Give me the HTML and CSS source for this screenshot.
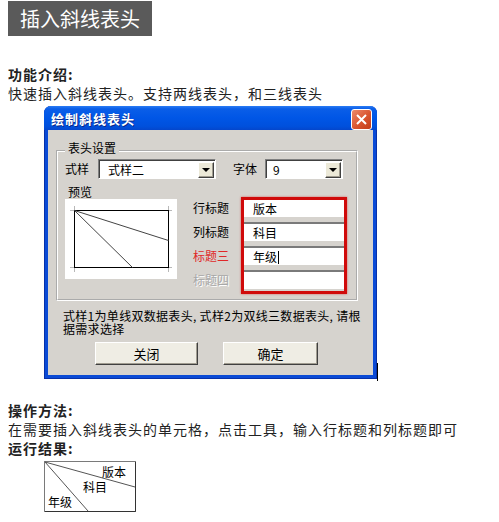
FILE: index.html
```html
<!DOCTYPE html>
<html lang="zh-CN">
<head>
  <meta charset="UTF-8">
  <title>插入斜线表头</title>
  <link rel="stylesheet" href="styles.css">
</head>
<body>

  <div class="banner">插入斜线表头</div>

  <h3 class="head">功能介绍:</h3>
  <p class="line">快速插入斜线表头。支持两线表头，和三线表头</p>

  <div class="dialog">
    <div class="titlebar">
      <span class="title">绘制斜线表头</span>
      <span class="close">
        <svg width="13" height="13" viewBox="0 0 13 13">
          <path d="M2 2 L11 11 M11 2 L2 11" stroke="#fff" stroke-width="2" fill="none"/>
        </svg>
      </span>
    </div>

    <div class="dlg-body">
      <fieldset class="group">
        <legend>表头设置</legend>

        <div class="row-top">
          <span class="lbl">式样</span>
          <div class="select sel-style">
            <span class="sel-text">式样二</span>
            <span class="drop"></span>
          </div>
          <span class="lbl lbl-font">字体</span>
          <div class="select sel-size">
            <span class="sel-text">9</span>
            <span class="drop"></span>
          </div>
        </div>

        <div class="row-main">
          <div class="preview-col">
            <div class="preview-lbl">预览</div>
            <div class="preview">
              <svg width="112" height="80" viewBox="0 0 112 80">
                <g stroke="#b8b8b8" stroke-width="1">
                  <path d="M5 11.5 H9 M9.5 7 V11 M103 11.5 H107 M103.5 7 V11"/>
                  <path d="M5 68.5 H9 M9.5 69 V73 M103 68.5 H107 M103.5 69 V73"/>
                </g>
                <rect x="9.5" y="11.5" width="94" height="57" fill="none" stroke="#000"/>
                <path d="M9.5 11.5 L103.5 41.5 M9.5 11.5 L67.5 68.5" stroke="#444" fill="none"/>
              </svg>
            </div>
          </div>

          <div class="labels">
            <span>行标题</span>
            <span>列标题</span>
            <span class="red">标题三</span>
            <span class="off">标题四</span>
          </div>

          <div class="fields">
            <div class="field">版本</div>
            <div class="field">科目</div>
            <div class="field">年级<span class="caret"></span></div>
            <div class="field"></div>
          </div>
        </div>
      </fieldset>

      <p class="note">式样1为单线双数据表头, 式样2为双线三数据表头, 请根<br>据需求选择</p>

      <div class="buttons">
        <button class="btn btn-close">关闭</button>
        <button class="btn btn-ok">确定</button>
      </div>
    </div>
  </div>

  <h3 class="head head-op">操作方法:</h3>
  <p class="line">在需要插入斜线表头的单元格，点击工具，输入行标题和列标题即可</p>
  <h3 class="head head-res">运行结果:</h3>

  <div class="result">
    <svg width="92" height="51" viewBox="0 0 92 51">
      <rect x="0.5" y="0.5" width="91" height="50" fill="#fff" stroke="#7a7a7a"/>
      <path d="M1 50.5 H91.5 V1" stroke="#333" fill="none"/>
      <path d="M1 1 L91 26 M1 1 L44 50" stroke="#555" fill="none"/>
      <text x="58" y="16" class="res-text">版本</text>
      <text x="39" y="31" class="res-text">科目</text>
      <text x="4" y="46" class="res-text">年级</text>
    </svg>
  </div>

</body>
</html>
```

FILE: styles.css
```css
body {
  margin: 1px 8px;
  font-family: "Noto Sans CJK SC", sans-serif;
  font-size: 14px;
  line-height: 19px;
  color: #222;
  background: #fff;
}

.banner {
  width: 132px;
  height: 35px;
  padding-left: 12px;
  background: #5a5a5a;
  color: #fff;
  font-size: 20px;
  line-height: 35px;
}

.head {
  margin: 29px 0 0;
  font-size: 14px;
  line-height: 19px;
  font-weight: bold;
  letter-spacing: 1px;
}
.head-op {
  margin-top: 22px;
}
.head-res {
  margin-top: 0;
}
.line {
  margin: 0;
  letter-spacing: 1px;
}

/* window */
.dialog {
  position: relative;
  width: 325px;
  margin: 3px 0 0 36px;
  padding: 0 4px 4px;
  background: #0a4ad6;
  border-radius: 7px 7px 0 0;
  box-shadow: inset 1px 0 #0831a8, inset -1px -1px #0831a8;
}
.dialog::after {
  content: "";
  position: absolute;
  right: -1px;
  bottom: -2px;
  width: 1px;
  height: 18px;
  background: #000;
}
.titlebar {
  height: 24px;
  margin: 0 -4px;
  padding: 0 5px 0 7px;
  display: flex;
  align-items: center;
  justify-content: space-between;
  border-radius: 7px 7px 0 0;
  background: linear-gradient(#2a7cf5 0%, #0a5ee8 12%, #0056e6 50%, #0050dc 85%, #0446cc 100%);
}
.title {
  color: #fff;
  font-size: 13px;
  font-weight: bold;
  letter-spacing: 1px;
  text-shadow: 1px 1px #0b2a8a;
}
.close {
  width: 19px;
  height: 19px;
  margin-top: 2px;
  border: 1px solid #fff;
  border-radius: 3px;
  background: linear-gradient(135deg, #ec8a6c, #d9542f 55%, #c23c18);
  display: flex;
  align-items: center;
  justify-content: center;
}

.dlg-body {
  height: 245px;
  box-sizing: border-box;
  padding: 10px 0 0 8px;
  background: #d6d3ce;
  font-size: 12px;
  color: #000;
}

.group {
  width: 284px;
  margin: 0;
  padding: 0 7px 5px;
  border: 2px groove #fff;
}
.group legend {
  padding: 0 3px 6px;
  font-size: 12px;
  line-height: 15px;
}

.row-top {
  display: flex;
  align-items: center;
  height: 20px;
  margin-top: -2px;
}
.lbl {
  width: 24px;
  margin-right: 9px;
  line-height: 20px;
}
.lbl-font {
  margin-left: 17px;
  margin-right: 8px;
}
.select {
  height: 20px;
  box-sizing: border-box;
  display: flex;
  align-items: center;
  justify-content: space-between;
  background: #fff;
  border: 1px solid;
  border-color: #808080 #fff #fff #808080;
  box-shadow: inset 1px 1px #404040;
  padding: 1px 1px 0 0;
}
.sel-style {
  width: 118px;
}
.sel-size {
  width: 78px;
}
.sel-text {
  padding-left: 9px;
  line-height: 16px;
}
.sel-size .sel-text {
  padding-left: 7px;
}
.drop {
  position: relative;
  width: 16px;
  height: 16px;
  box-sizing: border-box;
  background: #ece9d8;
  border: 1px solid;
  border-color: #fff #404040 #404040 #fff;
  box-shadow: inset -1px -1px #a09c90;
}
.drop::before {
  content: "";
  position: absolute;
  left: 3px;
  top: 5px;
  border-left: 4px solid transparent;
  border-right: 4px solid transparent;
  border-top: 4px solid #000;
}

.row-main {
  display: flex;
  margin-top: 6px;
}
.preview-col {
  width: 112px;
}
.preview-lbl {
  padding-left: 3px;
  line-height: 14px;
}
.preview {
  width: 112px;
  height: 80px;
  background: #fff;
}
.preview svg {
  display: block;
}

.labels {
  width: 48px;
  margin-left: 16px;
  padding-top: 11px;
}
.labels span {
  display: block;
  height: 24px;
  line-height: 24px;
}
.labels .red {
  color: #e02828;
}
.labels .off {
  color: #a8a8a8;
  text-shadow: 1px 1px #fff;
}

.fields {
  width: 106px;
  height: 97px;
  box-sizing: border-box;
  margin-top: 12px;
  border: 3px solid #d00a0a;
  box-shadow: 0 0 2px rgba(220, 20, 20, 0.6);
}
.field {
  height: 17px;
  padding-left: 9px;
  background: #fff;
  line-height: 17px;
}
.field + .field {
  margin-top: 5px;
  border-top: 2px solid #7a7a7a;
}
.caret {
  display: inline-block;
  width: 1px;
  height: 13px;
  margin-left: 1px;
  vertical-align: -2px;
  background: #000;
}

.note {
  margin: 8px 0 0 7px;
  line-height: 13px;
  letter-spacing: 0.3px;
}

.buttons {
  display: flex;
  margin: 7px 0 0 39px;
}
.btn {
  height: 23px;
  padding: 0;
  font-family: "Noto Sans CJK SC", sans-serif;
  font-size: 13px;
  color: #000;
  background: #efede4;
  border: 1px solid;
  border-color: #fff #404040 #404040 #fff;
  box-shadow: inset -1px -1px #a09c90;
}
.btn-close {
  width: 103px;
}
.btn-ok {
  width: 95px;
  margin-left: 25px;
}

.result {
  width: 92px;
  height: 51px;
  margin: 3px 0 0 36px;
}
.result svg {
  display: block;
}
.res-text {
  font-family: "Noto Sans CJK SC", sans-serif;
  font-size: 12px;
  fill: #000;
}
```
